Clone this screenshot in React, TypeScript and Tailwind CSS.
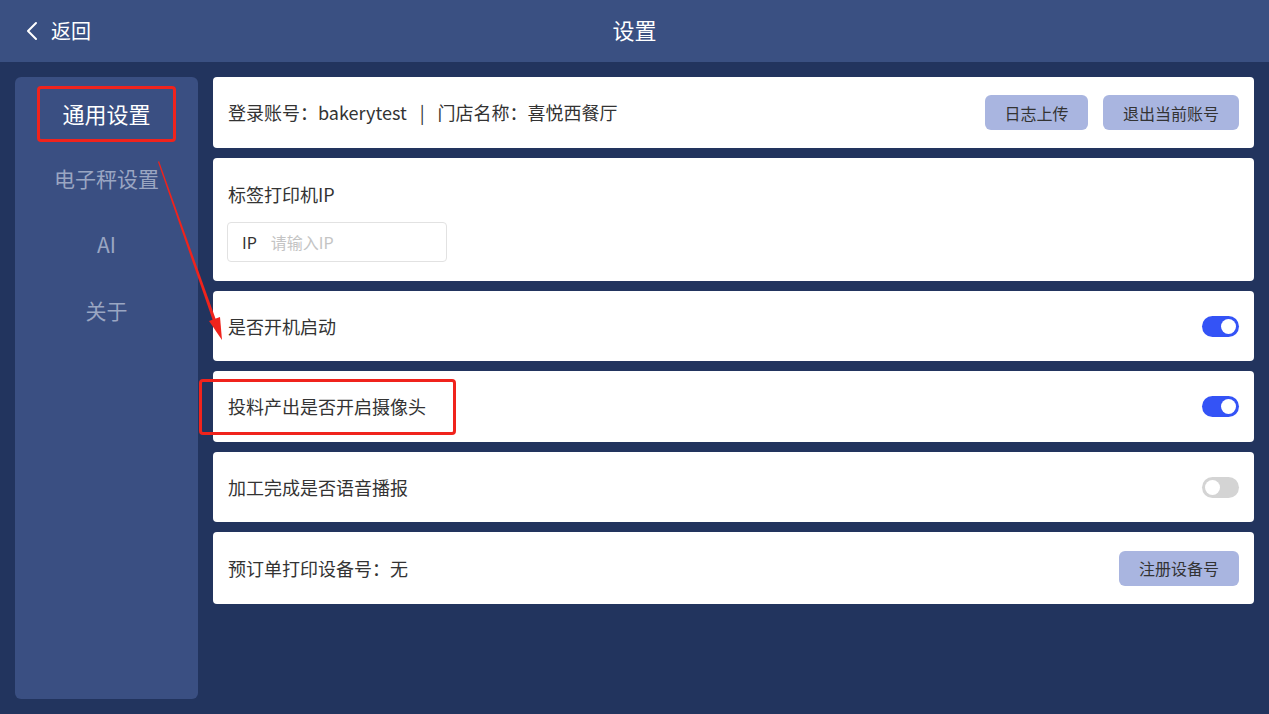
import React from "react";

const font = { fontFamily: '"Noto Sans CJK SC", "Noto Sans", "Liberation Sans", sans-serif' };

function Toggle({ on }: { on: boolean }) {
  return (
    <div
      className={`w-[37px] h-[21px] rounded-full flex items-center px-[3px] ${
        on ? "bg-[#3453f6] justify-end" : "bg-[#d4d4d4] justify-start"
      }`}
    >
      <div className="w-[15px] h-[15px] rounded-full bg-white" />
    </div>
  );
}

function Card({ children, className = "h-[71px]" }: { children: React.ReactNode; className?: string }) {
  return (
    <div className={`bg-white rounded-[4px] px-[15px] flex items-center ${className}`}>
      {children}
    </div>
  );
}

function Btn({ children, w }: { children: React.ReactNode; w: string }) {
  return (
    <div
      className={`h-[35px] ${w} rounded-[6px] bg-[#a9b5e0] text-[#333] text-[16px] flex items-center justify-center`}
    >
      {children}
    </div>
  );
}

export default function App() {
  return (
    <div className="w-[1269px] h-[714px] bg-[#22345e] flex flex-col relative overflow-hidden" style={font}>
      <div className="h-[62px] bg-[#3a5082] flex items-center relative shrink-0">
        <div className="flex items-center pl-[25px] gap-[12px] text-white text-[20px]">
          <svg width="14" height="20" viewBox="0 0 14 20" fill="none">
            <path d="M11 2 L3 10 L11 18" stroke="white" strokeWidth="2" strokeLinecap="round" strokeLinejoin="round" />
          </svg>
          <span>返回</span>
        </div>
        <div className="absolute left-0 right-0 top-[14px] text-center text-white text-[22px] leading-[30px] pointer-events-none">设置</div>
      </div>
      <div className="flex flex-1 pt-[15px] pb-[15px] pl-[15px] pr-[15px] gap-[15px]">
        <div className="w-[183px] bg-[#3a4f82] rounded-[6px] flex flex-col items-center pt-[3px] shrink-0">
          <div className="h-[66px] flex items-center justify-center text-white text-[22px]">通用设置</div>
          <div className="h-[66px] flex items-center justify-center text-[#9aa6c2] text-[21px]">电子秤设置</div>
          <div className="h-[66px] flex items-center justify-center text-[#9aa6c2] text-[21px]">AI</div>
          <div className="h-[66px] flex items-center justify-center text-[#9aa6c2] text-[21px]">关于</div>
        </div>
        <div className="flex-1 flex flex-col gap-[10px] text-[18px] text-[#333]">
          <Card>
            <div className="flex-1 flex items-center">
              <span>登录账号：bakerytest</span>
              <span className="mx-[13px]">|</span>
              <span>门店名称：喜悦西餐厅</span>
            </div>
            <div className="flex gap-[15px]">
              <Btn w="w-[103px]">日志上传</Btn>
              <Btn w="w-[136px]">退出当前账号</Btn>
            </div>
          </Card>
          <div className="bg-white rounded-[4px] h-[123px] px-[15px] flex flex-col">
            <div className="pt-[23px] h-[64px]">标签打印机IP</div>
            <div className="w-[220px] h-[40px] border border-[#e2e2e2] rounded-[4px] flex items-center px-[14px] gap-[14px] text-[16px] -ml-[1px]">
              <span className="text-[#333]">IP</span>
              <span className="text-[#c4c4c4]">请输入IP</span>
            </div>
          </div>
          <Card className="h-[70px]">
            <div className="flex-1">是否开机启动</div>
            <Toggle on />
          </Card>
          <Card>
            <div className="flex-1">投料产出是否开启摄像头</div>
            <Toggle on />
          </Card>
          <Card className="h-[70px]">
            <div className="flex-1">加工完成是否语音播报</div>
            <Toggle on={false} />
          </Card>
          <Card className="h-[72px]">
            <div className="flex-1">预订单打印设备号：无</div>
            <Btn w="w-[120px]">注册设备号</Btn>
          </Card>
        </div>
      </div>
      {/* Annotations */}
      <div className="absolute left-[37px] top-[86px] w-[139px] h-[56px] border-[3px] border-[#f0231c] rounded-[4px] pointer-events-none" />
      <div className="absolute left-[199px] top-[379px] w-[257px] h-[56px] border-[3px] border-[#f0231c] rounded-[4px] pointer-events-none" />
      <svg className="absolute left-0 top-0 pointer-events-none" width="1269" height="714">
        <polygon points="158,162 159,161 216,320 213,321" fill="#f0231c" />
        <polygon points="209,321 220,317 222,340" fill="#f0231c" />
      </svg>
    </div>
  );
}
